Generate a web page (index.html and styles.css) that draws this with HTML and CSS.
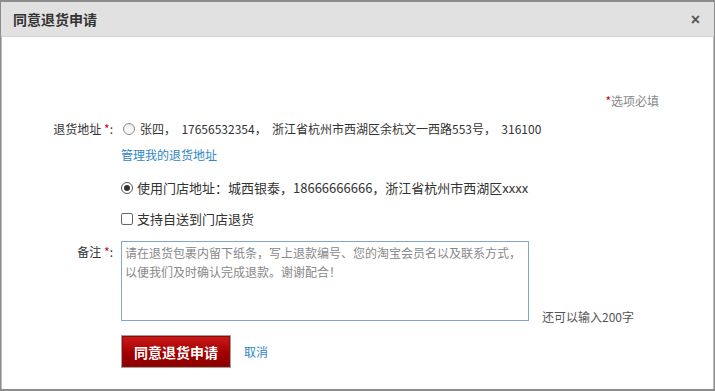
FILE: index.html
```html
<!DOCTYPE html>
<html lang="zh-CN">
<head>
<meta charset="utf-8">
<title>同意退货申请</title>
<link rel="stylesheet" href="styles.css">
</head>
<body>
<div class="dialog">
  <div class="dialog-head">
    <h2 class="dialog-title">同意退货申请</h2>
    <span class="dialog-close">×</span>
  </div>
  <div class="dialog-body">
    <div class="required-note"><span class="star">*</span>选项必填</div>
    <div class="form-row row-address">
      <div class="form-label">退货地址 <span class="star">*</span>:</div>
      <div class="form-field">
        <label class="option"><span class="radio"></span><span class="addr-text">张四，&nbsp; 17656532354，&nbsp; 浙江省杭州市西湖区余杭文一西路553号，&nbsp; 316100</span></label>
        <a class="link manage-link" href="#">管理我的退货地址</a>
      </div>
    </div>
    <div class="form-row row-store">
      <div class="form-label"></div>
      <div class="form-field">
        <label class="option"><span class="radio checked"></span><span class="store-text">使用门店地址：城西银泰，18666666666，浙江省杭州市西湖区xxxx</span></label>
      </div>
    </div>
    <div class="form-row row-self">
      <div class="form-label"></div>
      <div class="form-field">
        <label class="option"><span class="checkbox"></span><span class="store-text">支持自送到门店退货</span></label>
      </div>
    </div>
    <div class="form-row row-remark">
      <div class="form-label">备注 <span class="star">*</span>:</div>
      <div class="form-field remark-field">
        <textarea class="remark" placeholder="请在退货包裹内留下纸条，写上退款编号、您的淘宝会员名以及联系方式，以便我们及时确认完成退款。谢谢配合！"></textarea>
        <span class="counter">还可以输入200字</span>
      </div>
    </div>
    <div class="form-row row-actions">
      <div class="form-label"></div>
      <div class="form-field actions">
        <button class="btn-primary" type="button">同意退货申请</button>
        <a class="link cancel" href="#">取消</a>
      </div>
    </div>
  </div>
</div>
</body>
</html>
```

FILE: styles.css
```css
html, body {
  margin: 0;
  padding: 0;
  background: #fff;
}
body {
  font-family: "Noto Sans CJK SC", "Liberation Sans", sans-serif;
  font-size: 12px;
  color: #333;
}
.dialog {
  box-sizing: border-box;
  width: 715px;
  height: 391px;
  border: 1px solid #8c8c8c;
  border-top: 2px solid #8c8c8c;
  border-bottom: 2px solid #8c8c8c;
  box-shadow: inset 1px 0 0 #bdbdbd, inset -1px 0 0 #bdbdbd;
  background: #fff;
  overflow: hidden;
}
.dialog-head {
  height: 34px;
  background: #e1e1e1;
  border-bottom: 1px solid #d2d2d2;
  display: flex;
  align-items: center;
  justify-content: space-between;
  padding: 0 14px 0 12px;
}
.dialog-title {
  margin: 0;
  font-size: 14px;
  font-weight: bold;
  color: #333;
}
.dialog-close {
  font-family: "Liberation Sans", sans-serif;
  font-size: 16px;
  font-weight: bold;
  color: #555;
  line-height: 16px;
  margin-top: 2px;
}
.dialog-body {
  padding: 54px 55px 0 0;
}
.star {
  color: #d0021b;
}
.required-note {
  text-align: right;
  color: #888;
  line-height: 20px;
}
.form-row {
  display: flex;
  align-items: flex-start;
}
.form-label {
  width: 112px;
  flex: none;
  text-align: right;
  line-height: 20px;
  padding-right: 8px;
}
.form-field {
  flex: 1;
}
.row-address {
  margin-top: 8px;
}
.option {
  display: flex;
  align-items: center;
  line-height: 20px;
}
.radio {
  width: 12px;
  height: 12px;
  border: 1px solid #8a8a8a;
  border-radius: 50%;
  box-sizing: border-box;
  background: linear-gradient(#ececec, #fff);
  flex: none;
  position: relative;
}
.row-address .radio {
  margin-left: 2px;
  margin-right: 5px;
}
.radio.checked {
  border-color: #555;
  background: #fff;
  margin-right: 4px;
}
.radio.checked::after {
  content: "";
  position: absolute;
  left: 2px;
  top: 2px;
  width: 6px;
  height: 6px;
  border-radius: 50%;
  background: #333;
}
.checkbox {
  width: 12px;
  height: 12px;
  border: 1px solid #666;
  border-radius: 2px;
  box-sizing: border-box;
  margin-right: 4px;
  flex: none;
}
.store-text {
  font-size: 13px;
}
.link {
  color: #2f86c2;
  text-decoration: none;
}
.manage-link {
  display: inline-block;
  line-height: 20px;
  margin-top: 6px;
}
.row-store {
  margin-top: 13px;
}
.row-self {
  margin-top: 11px;
}
.row-remark {
  margin-top: 12px;
}
.row-remark .form-label {
  margin-top: 1px;
}
.remark-field {
  display: flex;
  align-items: flex-end;
}
.remark {
  box-sizing: border-box;
  width: 408px;
  height: 80px;
  margin: 0;
  border: 1px solid #86a6c7;
  padding: 1px 3px;
  font-family: "Noto Sans CJK SC", sans-serif;
  font-size: 12px;
  line-height: 19px;
  resize: none;
  color: #333;
}
.remark::placeholder {
  color: #888;
}
.counter {
  margin-left: 13px;
  line-height: 20px;
  margin-bottom: -6px;
  color: #555;
}
.row-actions {
  margin-top: 14px;
}
.actions {
  display: flex;
  align-items: center;
}
.btn-primary {
  box-sizing: border-box;
  height: 33px;
  width: 110px;
  padding: 0;
  border: 1px solid #a0a0a0;
  box-shadow: inset 0 0 0 1px #8e0a0a;
  background: linear-gradient(#cc1a1a, #a30000 55%, #8a0000);
  color: #fff;
  font-family: "Noto Sans CJK SC", sans-serif;
  font-size: 14px;
  font-weight: bold;
}
.cancel {
  margin-left: 13px;
}
```
